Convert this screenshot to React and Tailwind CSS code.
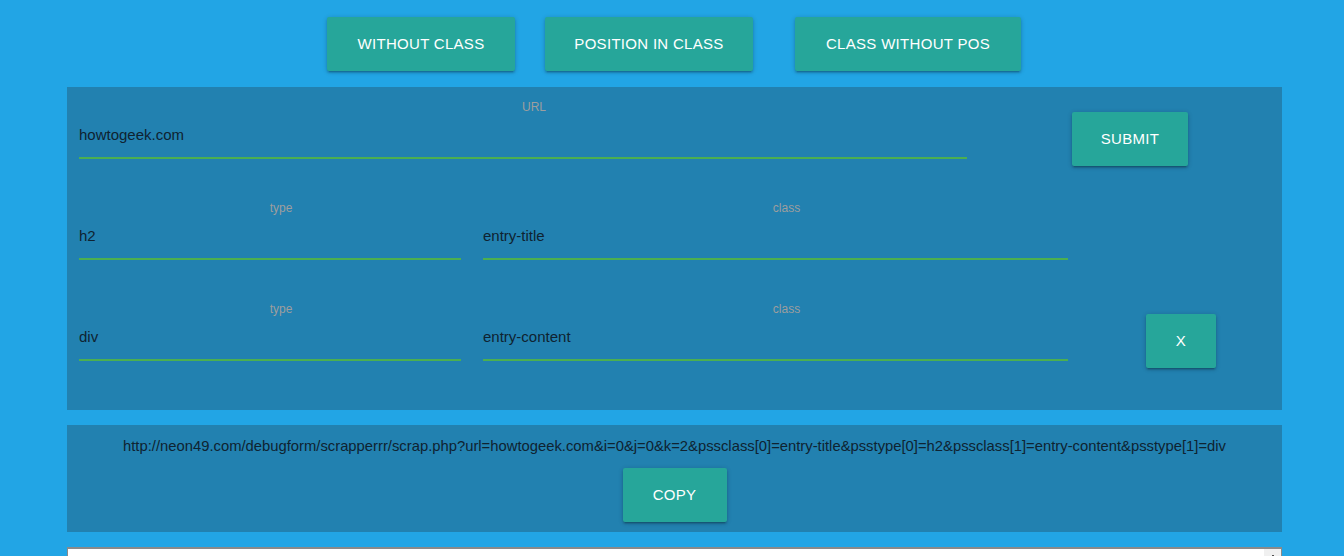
import React from 'react'

const font = "font-['Liberation_Sans',Arial,sans-serif]"
const btn =
  'flex items-center justify-center h-[54px] bg-[#26a69a] text-white text-[15px] tracking-[0.3px] uppercase rounded-[2px] shadow-[0_2px_2px_0_rgba(0,0,0,0.14),0_3px_1px_-2px_rgba(0,0,0,0.12),0_1px_5px_0_rgba(0,0,0,0.2)]'

// one underlined text field with its small centred label
function Field({ label, value, width }) {
  return (
    <div className={width}>
      <div className="pl-[22px] text-center text-[12px] leading-[14px] text-[#9e9e9e]">{label}</div>
      <div className="mt-[12px] text-[15px] leading-[18px] text-[#0f2331]">{value}</div>
      <div className="mt-[13px] h-[2px] bg-[#4caf50]"></div>
    </div>
  )
}

const link =
  'http://neon49.com/debugform/scrapperrr/scrap.php?url=howtogeek.com&i=0&j=0&k=2&pssclass[0]=entry-title&psstype[0]=h2&pssclass[1]=entry-content&psstype[1]=div'

export default function App() {
  return (
    <div className={`h-[556px] overflow-hidden bg-[#22a5e5] ${font}`}>
      {/* mode buttons */}
      <div className="flex pt-[17px] pl-[327px]">
        <button className={`${btn} w-[188px]`}>Without class</button>
        <button className={`${btn} w-[208px] ml-[30px]`}>Position in class</button>
        <button className={`${btn} w-[226px] ml-[42px]`}>Class without pos</button>
      </div>

      {/* form */}
      <div className="mt-[16px] ml-[67px] w-[1215px] h-[323px] bg-[#2281b0] pl-[12px] pt-[13px]">
        <div className="flex items-start">
          <Field label="URL" value="howtogeek.com" width="w-[888px]" />
          <button className={`${btn} w-[116px] ml-[105px] mt-[12px]`}>Submit</button>
        </div>

        <div className="flex items-start mt-[35px]">
          <Field label="type" value="h2" width="w-[382px]" />
          <div className="ml-[22px]">
            <Field label="class" value="entry-title" width="w-[585px]" />
          </div>
        </div>

        <div className="flex items-start mt-[42px]">
          <Field label="type" value="div" width="w-[382px]" />
          <div className="ml-[22px]">
            <Field label="class" value="entry-content" width="w-[585px]" />
          </div>
          <button className={`${btn} w-[70px] ml-[78px] mt-[12px]`}>X</button>
        </div>
      </div>

      {/* generated link */}
      <div className="mt-[15px] ml-[67px] w-[1215px] h-[107px] bg-[#2281b0] pt-[13px] flex flex-col items-center">
        <div className="text-[14.8px] leading-[16px] text-[#0f2331] whitespace-nowrap">{link}</div>
        <button className={`${btn} w-[104px] mt-[14px]`}>Copy</button>
      </div>

      {/* output box */}
      <div className="mt-[15px] ml-[67px] w-[1215px] h-[40px] bg-white border-t-2 border-l border-r border-[#8a8a8a] flex justify-end">
        <div className="w-[17px] bg-[#f0f0f0] flex justify-center pt-[6px]">
          <div className="w-[2px] h-[2px] bg-[#505050]"></div>
        </div>
      </div>
    </div>
  )
}
